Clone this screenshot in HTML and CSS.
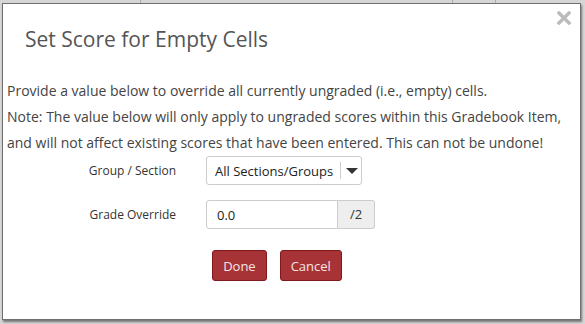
FILE: index.html
```html
<!DOCTYPE html>
<html lang="en">
<head>
  <meta charset="UTF-8">
  <title>Set Score for Empty Cells</title>
  <link rel="stylesheet" href="styles.css">
</head>
<body>
  <div class="backdrop">
    <div class="behind">
      <span class="ghost ghost-a"></span>
      <span class="ghost ghost-b"></span>
      <span class="ghost ghost-c"></span>
    </div>
    <div class="dialog">
      <button class="close" aria-label="Close">
        <svg width="14" height="14" viewBox="0 0 14 14">
          <path d="M2 2 L12 12 M12 2 L2 12" stroke="#bcbcbc" stroke-width="3.4" stroke-linecap="square"/>
        </svg>
      </button>
      <h2 class="title">Set Score for Empty Cells</h2>
      <p class="text">Provide a value below to override all currently ungraded (i.e., empty) cells.</p>
      <p class="text note">Note: The value below will only apply to ungraded scores within this Gradebook Item, and will not affect existing scores that have been entered. This can not be undone!</p>

      <div class="form">
        <div class="row">
          <label class="label">Group / Section</label>
          <div class="select">
            <span class="select-text">All Sections/Groups</span>
            <span class="select-arrow"></span>
          </div>
        </div>
        <div class="row">
          <label class="label">Grade Override</label>
          <div class="input-group">
            <input class="input" type="text" value="0.0">
            <span class="addon">/2</span>
          </div>
        </div>
      </div>

      <div class="actions">
        <button class="btn">Done</button>
        <button class="btn">Cancel</button>
      </div>
    </div>
  </div>
</body>
</html>
```

FILE: styles.css
```css
body {
  margin: 0;
  background: #9a9a9a;
  font-family: "Open Sans", "Liberation Sans", sans-serif;
  color: #444;
}
.backdrop {
  width: 585px;
  height: 324px;
  position: relative;
  overflow: hidden;
  background: #d6d6d6;
}
.behind {
  height: 3px;
  position: relative;
}
.ghost {
  position: absolute;
  top: 0;
  width: 1px;
  height: 3px;
  background: #aaa;
}
.ghost-a {
  left: 140px;
}
.ghost-b {
  left: 452px;
}
.ghost-c {
  left: 495px;
}
.dialog {
  position: relative;
  margin-left: 2px;
  width: 577px;
  height: 315px;
  background: #fff;
  border: 1px solid #6f6f6f;
  box-shadow: 1px 2px 2px rgba(0, 0, 0, 0.45);
}
.close {
  position: absolute;
  top: 7px;
  right: 9px;
  padding: 0;
  border: none;
  background: none;
  cursor: pointer;
}
.title {
  margin: 20px 0 0 22px;
  font-size: 21px;
  font-weight: normal;
  color: #555;
  line-height: 30px;
}
.text {
  margin: 24px 0 0 4px;
  font-size: 14px;
  line-height: 26px;
  color: #444;
}
.note {
  margin-top: 0;
}
.row {
  display: flex;
  align-items: center;
  margin-bottom: 15px;
}
.label {
  width: 173px;
  padding-right: 30px;
  text-align: right;
  font-size: 12px;
  color: #333;
}
.select {
  display: flex;
  align-items: center;
  width: 154px;
  height: 27px;
  border: 1px solid #ccc;
  border-radius: 3px;
}
.select-text {
  flex: 1;
  padding-left: 8px;
  white-space: nowrap;
  font-size: 13px;
  color: #222;
}
.select-arrow {
  width: 20px;
  height: 17px;
  border-left: 1px solid #ccc;
  position: relative;
}
.select-arrow::after {
  content: "";
  position: absolute;
  left: 5px;
  top: 6px;
  border-left: 6px solid transparent;
  border-right: 6px solid transparent;
  border-top: 6px solid #333;
}
.input-group {
  display: flex;
  height: 29px;
}
.input {
  width: 132px;
  box-sizing: border-box;
  height: 29px;
  padding: 0 10px;
  border: 1px solid #ccc;
  border-radius: 3px 0 0 3px;
  font-family: inherit;
  font-size: 13px;
  color: #222;
}
.addon {
  width: 37px;
  box-sizing: border-box;
  height: 29px;
  line-height: 27px;
  text-align: center;
  border: 1px solid #ccc;
  border-left: none;
  border-radius: 0 3px 3px 0;
  background: #eee;
  font-size: 13px;
  color: #333;
}
.actions {
  display: flex;
  justify-content: center;
  gap: 13px;
  margin-top: 21px;
  padding-right: 29px;
}
.btn {
  height: 31px;
  padding: 0 10px;
  border: 1px solid #7d1a1e;
  border-radius: 3px;
  background: #a83337;
  color: #f3e6e6;
  font-family: inherit;
  font-size: 13px;
  cursor: pointer;
}
```
